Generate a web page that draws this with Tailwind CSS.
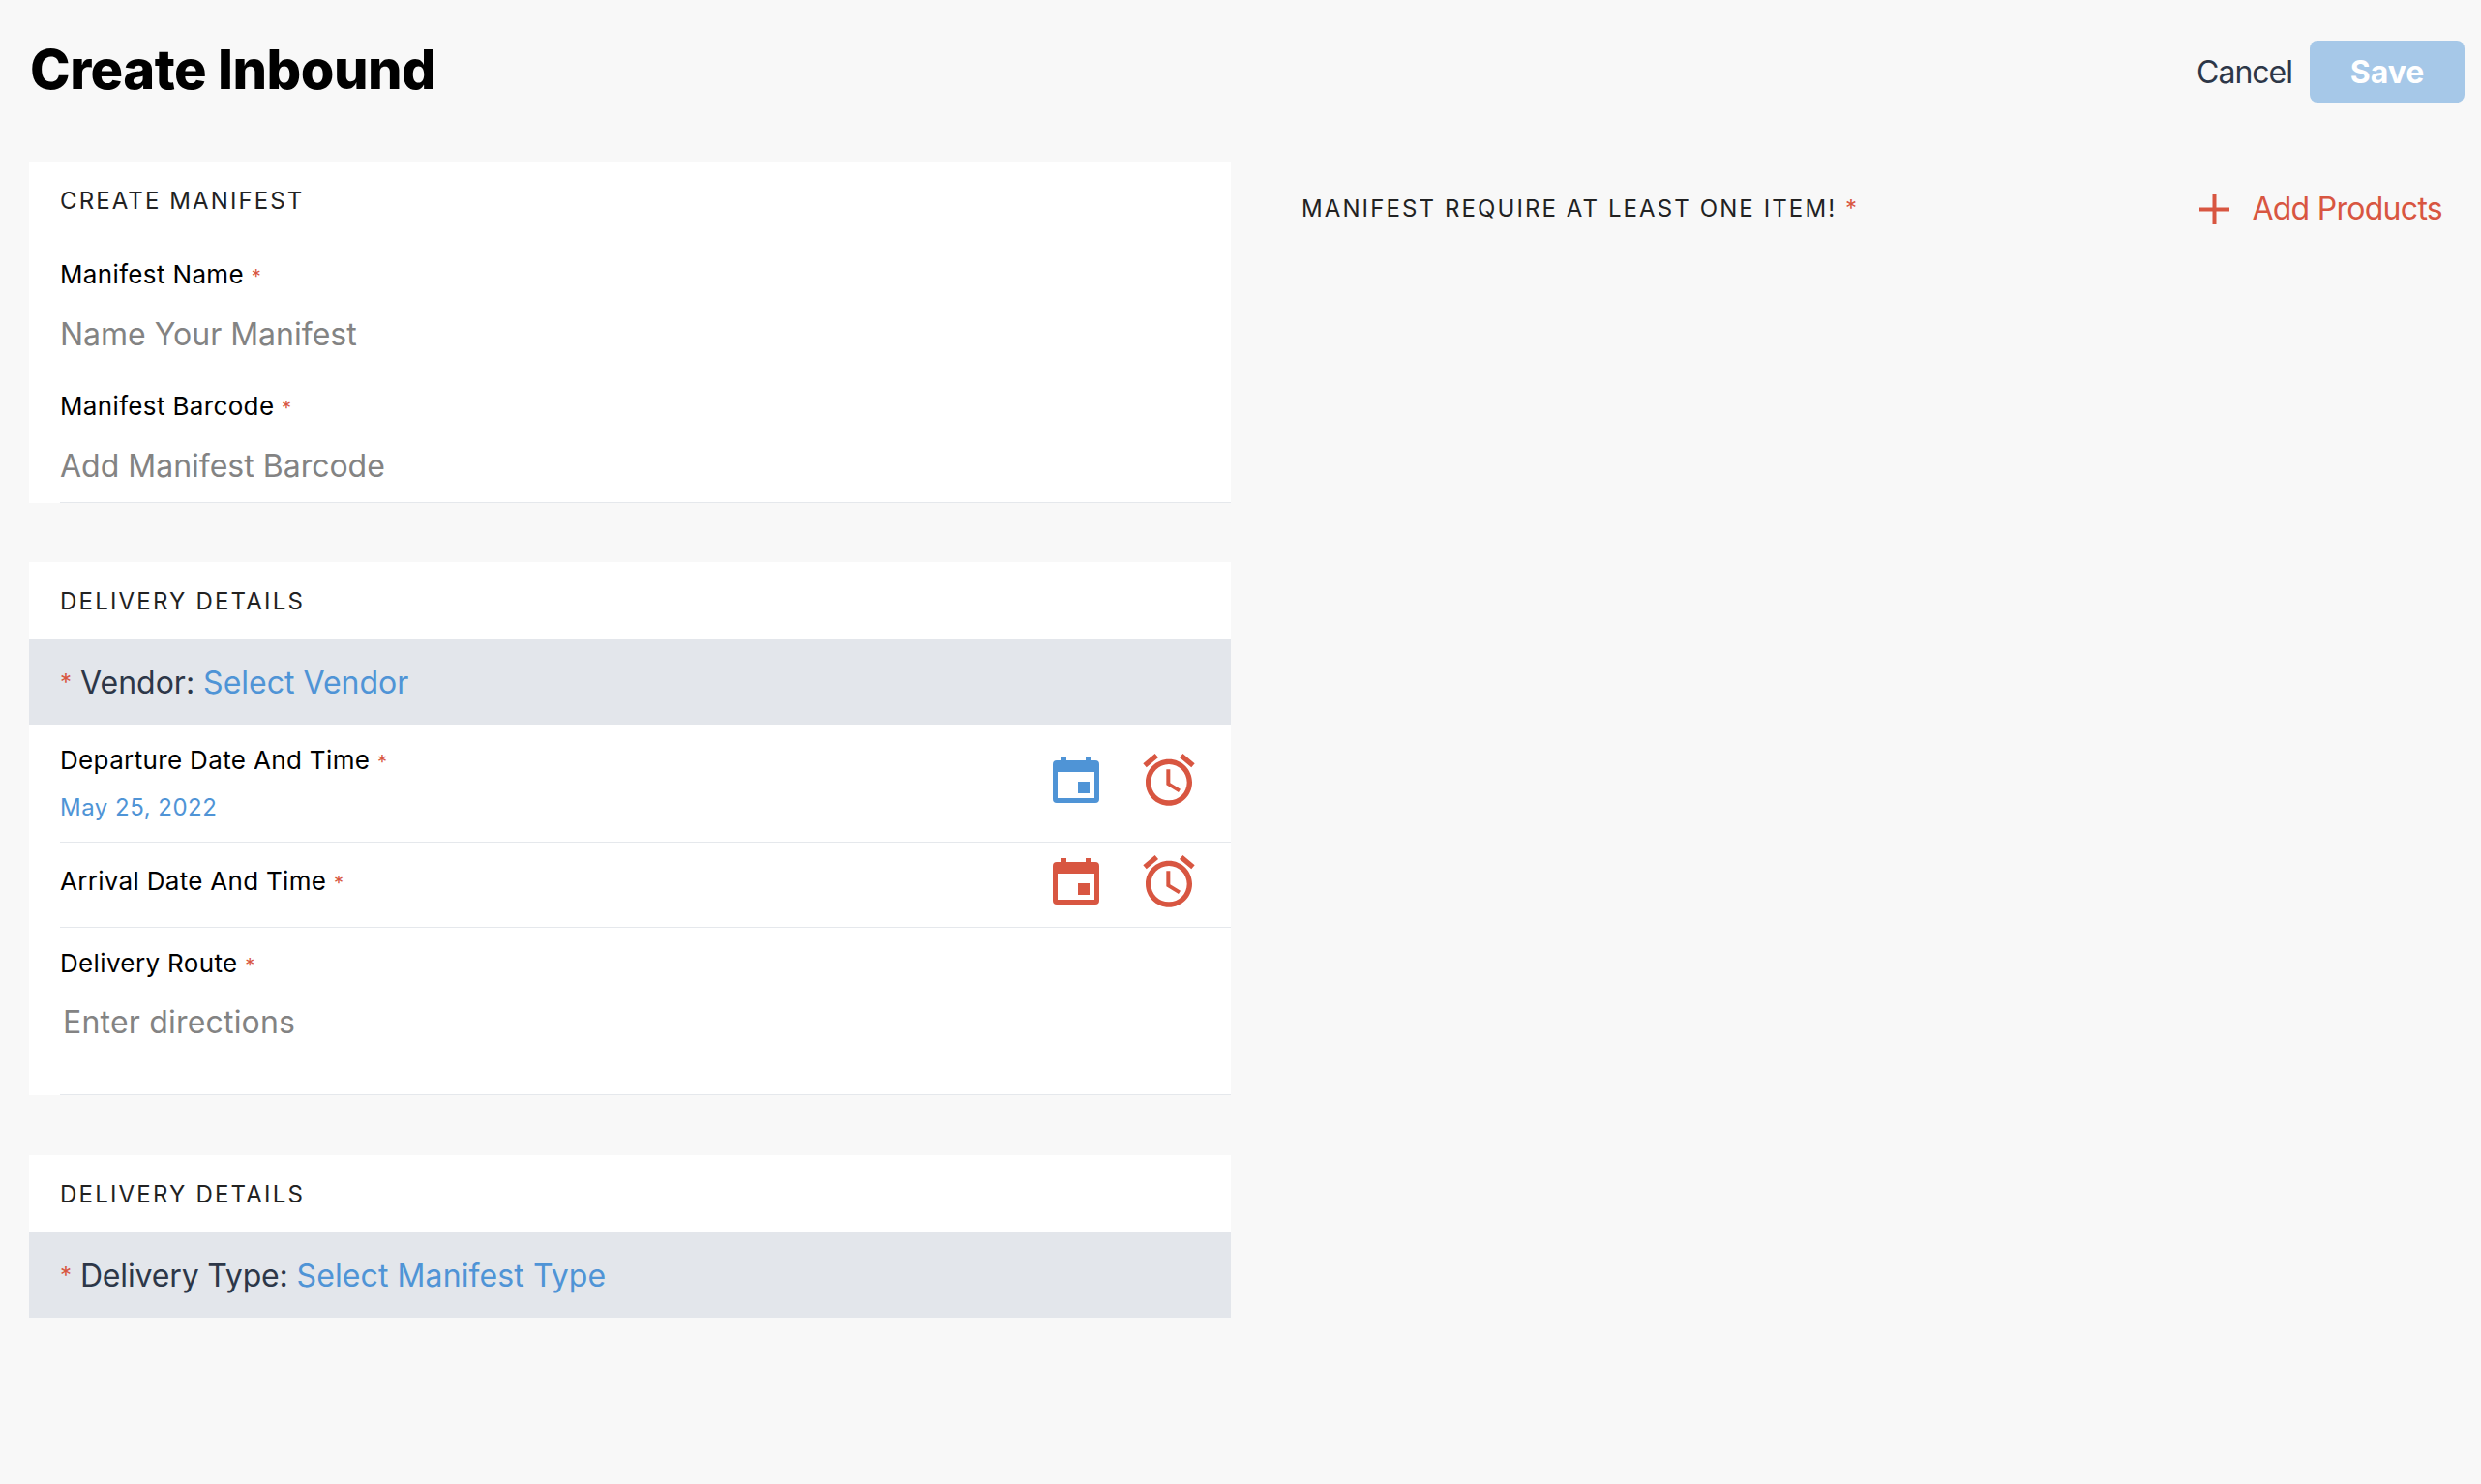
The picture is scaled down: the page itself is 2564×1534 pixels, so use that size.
<!DOCTYPE html>
<html lang="en">
<head>
  <meta charset="UTF-8">
  <title>Create Inbound</title>
  <script src="https://cdn.jsdelivr.net/npm/@tailwindcss/browser@4"></script>
</head>
<body class="bg-[#f8f8f8] font-['Inter',sans-serif] antialiased min-h-screen">

  <!-- header -->
  <header class="flex items-center justify-between pt-[42px] pb-[61px] pl-[31px] pr-[17px]">
    <h1 class="text-[56px] leading-[64px] font-extrabold text-black -mt-[5px] tracking-[-0.5px]">Create Inbound</h1>
    <div class="flex items-center">
      <button class="h-[64px] pt-[2px] text-[32px] leading-[62px] text-[#2d3748] mr-[18px] tracking-[-1px]">Cancel</button>
      <button class="w-[160px] h-[64px] pt-[2px] rounded-lg bg-[#a6c8e8] text-white text-[32px] font-bold">Save</button>
    </div>
  </header>

  <div class="flex">
    <!-- left column -->
    <div class="w-[1242px] ml-[30px]">

      <section class="bg-white">
        <h2 class="h-[81px] flex items-center pl-[32px] text-[24px] tracking-[2.1px] uppercase text-[#222]">Create Manifest</h2>
        <div class="ml-[32px] h-[136px] border-b border-[#e5e8ec]">
          <label class="block pt-[20px] text-[26px] leading-[32px] tracking-[0.35px] text-black">Manifest Name <span class="text-[20px] text-[#d85641]">*</span></label>
          <input class="block w-full mt-[11px] h-[64px] text-[32px] outline-none placeholder:text-[#838383]" placeholder="Name Your Manifest">
        </div>
        <div class="ml-[32px] h-[136px] border-b border-[#e5e8ec]">
          <label class="block pt-[20px] text-[26px] leading-[32px] tracking-[0.35px] text-black">Manifest Barcode <span class="text-[20px] text-[#d85641]">*</span></label>
          <input class="block w-full mt-[11px] h-[64px] text-[32px] outline-none placeholder:text-[#838383]" placeholder="Add Manifest Barcode">
        </div>
      </section>

      <section class="bg-white mt-[61px]">
        <h2 class="h-[80px] flex items-center pl-[32px] pt-[2px] text-[24px] tracking-[2.2px] uppercase text-[#222]">Delivery Details</h2>
        <div class="h-[88px] pt-[2px] bg-[#e3e6eb] flex items-center pl-[32px] text-[32px] text-[#2d3748]">
          <span class="text-[24px] text-[#d85641] mr-[9px]">*</span>Vendor:&nbsp;<span class="text-[#4f94d6]">Select Vendor</span>
        </div>

        <div class="ml-[32px] h-[122px] border-b border-[#e5e8ec] flex justify-between">
          <div class="pt-[21px]">
            <div class="text-[26px] leading-[32px] tracking-[0.35px] text-black">Departure Date And Time <span class="text-[20px] text-[#d85641]">*</span></div>
            <div class="mt-[15px] text-[24px] leading-[32px] tracking-[0.5px] text-[#4f94d6]">May 25, 2022</div>
          </div>
          <div class="flex items-center h-[64px] mt-[25px] pr-[32px]">
            <svg class="w-[48px] h-[48px] mr-[40px] fill-[#4f94d6]" viewBox="0 0 48 48"><path fill-rule="evenodd" d="M8 0h6v4h20V0h6v4h4a4 4 0 0 1 4 4v36a4 4 0 0 1-4 4H4a4 4 0 0 1-4-4V8a4 4 0 0 1 4-4h4zM5 16v27h38V16zM26 26h12v12H26z"/></svg>
            <svg class="w-[64px] h-[64px] fill-[#d85641]" viewBox="0 0 24 24"><path d="M22 5.72l-4.6-3.86-1.29 1.53 4.6 3.86L22 5.72zM7.88 3.39L6.6 1.86 2 5.71l1.29 1.53 4.59-3.85zM12.5 8H11v6l4.75 2.85.75-1.23-4-2.37V8zM12 4c-4.97 0-9 4.03-9 9s4.03 9 9 9 9-4.03 9-9-4.03-9-9-9zm0 16c-3.87 0-7-3.13-7-7s3.13-7 7-7 7 3.13 7 7-3.13 7-7 7z"/></svg>
          </div>
        </div>

        <div class="ml-[32px] h-[88px] border-b border-[#e5e8ec] flex justify-between">
          <div class="pt-[24px] text-[26px] leading-[32px] tracking-[0.3px] text-black">Arrival Date And Time <span class="text-[20px] text-[#d85641]">*</span></div>
          <div class="flex items-center h-[64px] mt-[8px] pr-[32px]">
            <svg class="w-[48px] h-[48px] mr-[40px] fill-[#d85641]" viewBox="0 0 48 48"><path fill-rule="evenodd" d="M8 0h6v4h20V0h6v4h4a4 4 0 0 1 4 4v36a4 4 0 0 1-4 4H4a4 4 0 0 1-4-4V8a4 4 0 0 1 4-4h4zM5 16v27h38V16zM26 26h12v12H26z"/></svg>
            <svg class="w-[64px] h-[64px] fill-[#d85641]" viewBox="0 0 24 24"><path d="M22 5.72l-4.6-3.86-1.29 1.53 4.6 3.86L22 5.72zM7.88 3.39L6.6 1.86 2 5.71l1.29 1.53 4.59-3.85zM12.5 8H11v6l4.75 2.85.75-1.23-4-2.37V8zM12 4c-4.97 0-9 4.03-9 9s4.03 9 9 9 9-4.03 9-9-4.03-9-9-9zm0 16c-3.87 0-7-3.13-7-7s3.13-7 7-7 7 3.13 7 7-3.13 7-7 7z"/></svg>
          </div>
        </div>

        <div class="ml-[32px] h-[173px] border-b border-[#e5e8ec]">
          <label class="block pt-[21px] text-[26px] leading-[32px] tracking-[0.35px] text-black">Delivery Route <span class="text-[20px] text-[#d85641]">*</span></label>
          <textarea class="block w-full mt-[15px] h-[80px] pl-[3px] py-[8px] text-[32px] leading-[40px] tracking-[0.2px] resize-none outline-none placeholder:text-[#838383]" placeholder="Enter directions"></textarea>
        </div>
      </section>

      <section class="bg-white mt-[62px]">
        <h2 class="h-[80px] flex items-center pl-[32px] pt-[2px] text-[24px] tracking-[2.2px] uppercase text-[#222]">Delivery Details</h2>
        <div class="h-[88px] pt-[2px] bg-[#e3e6eb] flex items-center pl-[32px] text-[32px] tracking-[-0.15px] text-[#2d3748]">
          <span class="text-[24px] text-[#d85641] mr-[9px]">*</span>Delivery Type:&nbsp;<span class="text-[#4f94d6] tracking-[0.1px]">Select Manifest Type</span>
        </div>
      </section>
    </div>

    <!-- right column -->
    <div class="flex-1 ml-[73px] pr-[40px] pt-[33px]">
      <div class="flex items-center justify-between h-[32px]">
        <div class="text-[24px] tracking-[2.1px] uppercase text-[#222]">Manifest require at least one item! <span class="text-[24px] text-[#d85641]">*</span></div>
        <button class="flex items-center text-[32px] text-[#d85641] tracking-[-0.72px]">
          <svg class="w-[31px] h-[31px] mr-[23px] stroke-[#d85641]" viewBox="0 0 31 31" stroke-width="4"><path d="M15.5 0v31M0 15.5h31"/></svg>
          Add Products
        </button>
      </div>
    </div>
  </div>

</body>
</html>
